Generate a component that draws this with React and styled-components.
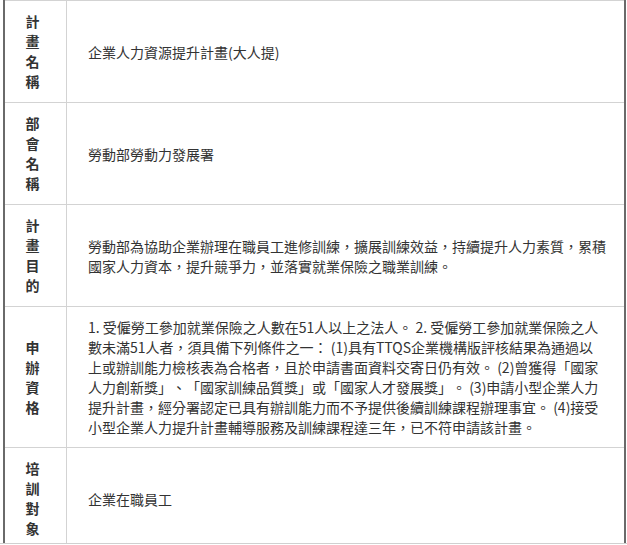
import React from "react";
import styled, { createGlobalStyle } from "styled-components";

const Global = createGlobalStyle`
  html, body { margin: 0; padding: 0; background: #fff; }
  body { font-family: "Noto Sans CJK TC", "Noto Sans", sans-serif; }
`;

const Page = styled.div`
  width: 627px;
  height: 544px;
  box-sizing: border-box;
  border-bottom: 1px solid #d0d0d0;
  overflow: hidden;
`;

const Frame = styled.div`
  margin-left: 3px;
  width: 623px;
  height: 543px;
  box-sizing: border-box;
  border-left: 2px solid #6a6a6a;
  border-right: 2px solid #6a6a6a;
  overflow: hidden;
`;

const Table = styled.table`
  width: 100%;
  border-collapse: collapse;
  table-layout: fixed;
`;

const Head = styled.th`
  width: 55px;
  border: 1px solid #d3d3d3;
  border-left: none;
  padding: 10px 6px 11px 0;
  vertical-align: middle;
  text-align: center;
  font-weight: 700;
  font-size: 14px;
  line-height: 20px;
  color: #333;
`;

const Stack = styled.span`
  display: block;
  width: 14px;
  margin: 0 auto;
  word-break: break-all;
`;

const Cell = styled.td`
  border: 1px solid #d3d3d3;
  border-right: none;
  padding: 10px 17px 10px 21px;
  vertical-align: middle;
  font-size: 14px;
  line-height: 20px;
  color: #333;
  text-align: left;
  text-spacing-trim: space-all;
`;

const rows = [
  { label: "計畫名稱", text: "企業人力資源提升計畫(大人提)" },
  { label: "部會名稱", text: "勞動部勞動力發展署" },
  {
    label: "計畫目的",
    text: "勞動部為協助企業辦理在職員工進修訓練，擴展訓練效益，持續提升人力素質，累積國家人力資本，提升競爭力，並落實就業保險之職業訓練。",
  },
  {
    label: "申辦資格",
    text: "1. 受僱勞工參加就業保險之人數在51人以上之法人。 2. 受僱勞工參加就業保險之人數未滿51人者，須具備下列條件之一： (1)具有TTQS企業機構版評核結果為通過以上或辦訓能力檢核表為合格者，且於申請書面資料交寄日仍有效。 (2)曾獲得「國家人力創新獎」、「國家訓練品質獎」或「國家人才發展獎」。 (3)申請小型企業人力提升計畫，經分署認定已具有辦訓能力而不予提供後續訓練課程辦理事宜。 (4)接受小型企業人力提升計畫輔導服務及訓練課程達三年，已不符申請該計畫。",
  },
  { label: "培訓對象", text: "企業在職員工" },
];

export default function App() {
  return (
    <>
      <Global />
      <Page>
        <Frame>
          <Table>
            <tbody>
              {rows.map((r) => (
                <tr key={r.label}>
                  <Head>
                    <Stack>{r.label}</Stack>
                  </Head>
                  <Cell>{r.text}</Cell>
                </tr>
              ))}
            </tbody>
          </Table>
        </Frame>
      </Page>
    </>
  );
}
